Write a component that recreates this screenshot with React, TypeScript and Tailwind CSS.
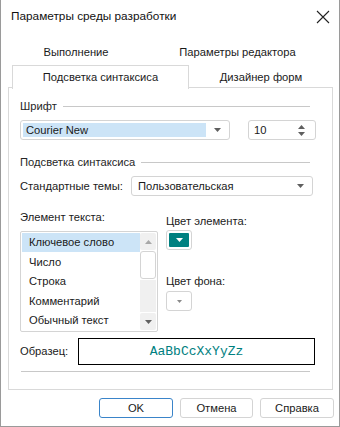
import React from "react";

const font = { fontFamily: '"Liberation Sans", Arial, sans-serif' };

function Arrow({ color = "#5f5f5f" }: { color?: string }) {
  return (
    <svg width="7" height="4" viewBox="0 0 7 4">
      <path d="M0 0 H7 L3.5 4 Z" fill={color} />
    </svg>
  );
}

function GroupHeader({ title }: { title: string }) {
  return (
    <div className="flex items-center h-[16px] pr-[22px]">
      <span className="text-[#262626]">{title}</span>
      <div className="flex-1 h-px bg-[#c8c8c8] ml-[6px]" />
    </div>
  );
}

const items = ["Ключевое слово", "Число", "Строка", "Комментарий", "Обычный текст"];

export default function App() {
  return (
    <div
      className="w-[340px] h-[427px] bg-white border-x border-b border-[#9a9a9a] flex flex-col text-[11.2px] text-[#1a1a1a] whitespace-nowrap"
      style={font}
    >
      {/* Title bar */}
      <div className="h-[33px] flex items-center justify-between pl-[10px] pr-[8px]">
        <span className="text-[11.8px] text-[#111]">Параметры среды разработки</span>
        <svg width="14" height="14" viewBox="0 0 14 14" className="mr-[1px]">
          <path d="M1 1 L13 13 M13 1 L1 13" stroke="#222" strokeWidth="1.1" />
        </svg>
      </div>

      {/* Tabs */}
      <div className="flex h-[22px] mt-[8px] pl-[11px]">
        <div className="w-[128px] flex items-center justify-center">Выполнение</div>
        <div className="w-[195px] flex items-center justify-center">Параметры редактора</div>
      </div>
      <div className="flex h-[25px] pl-[7px] pr-[6px] items-end">
        <div className="w-[4px] h-px bg-[#d9d9d9]" />
        <div className="w-[177px] h-[24px] border-x border-t border-[#d9d9d9] flex items-center justify-center -mb-px bg-white relative">
          Подсветка синтаксиса
        </div>
        <div className="flex-1 h-[21px] flex items-center justify-center border-b border-[#d9d9d9]">
          Дизайнер форм
        </div>
      </div>

      {/* Panel */}
      <div className="mx-[7px] mr-[6px] h-[302px] border-x border-b border-[#d9d9d9] flex flex-col pl-[11px] pt-[10px]">
        <GroupHeader title="Шрифт" />
        <div className="flex mt-[6px] h-[20px]">
          <div className="w-[210px] h-[20px] border border-[#d4d4d4] rounded-[3px] flex items-center pl-[2px] pr-[8px]">
            <div className="flex-1 h-[14px] bg-[#cce4f7] flex items-center pl-[3px]">Courier New</div>
            <div className="ml-[8px]">
              <Arrow />
            </div>
          </div>
          <div className="w-[68px] h-[20px] ml-[18px] border border-[#d4d4d4] rounded-[3px] flex items-center pl-[5px] pr-[10px] justify-between">
            <span>10</span>
            <div className="flex flex-col gap-[3px]">
              <svg width="7" height="4" viewBox="0 0 7 4">
                <path d="M0 4 H7 L3.5 0 Z" fill="#5f5f5f" />
              </svg>
              <Arrow />
            </div>
          </div>
        </div>

        <div className="mt-[14px]">
          <GroupHeader title="Подсветка синтаксиса" />
        </div>
        <div className="flex items-center mt-[6px] h-[20px]">
          <span className="w-[111px]">Стандартные темы:</span>
          <div className="w-[182px] h-[20px] border border-[#d4d4d4] rounded-[3px] flex items-center justify-between pl-[6px] pr-[8px]">
            <span>Пользовательская</span>
            <Arrow />
          </div>
        </div>

        <div className="flex mt-[13px]">
          <div className="w-[138px] flex flex-col">
            <div className="h-[16px] flex items-center">Элемент текста:</div>
            <div className="mt-[6px] h-[101px] border border-[#d4d4d4] rounded-[2px] flex p-px">
              <div className="flex-1 flex flex-col">
                {items.map((t, i) => (
                  <div
                    key={t}
                    className={`h-[20px] flex items-center pl-[7px] ${i === 0 ? "bg-[#cce4f7]" : ""}`}
                  >
                    {t}
                  </div>
                ))}
              </div>
              <div className="w-[16px] flex flex-col items-center gap-px">
                <div className="w-[16px] h-[17px] rounded-[2px] bg-[#f0f0f0] flex items-center justify-center">
                  <svg width="7" height="4" viewBox="0 0 7 4">
                    <path d="M0 4 H7 L3.5 0 Z" fill="#a8a8a8" />
                  </svg>
                </div>
                <div className="w-[16px] h-[28px] border border-[#d4d4d4] rounded-[3px] bg-white" />
                <div className="flex-1 w-[16px] bg-[#f0f0f0]" />
                <div className="w-[16px] h-[17px] rounded-[2px] bg-[#f0f0f0] flex items-center justify-center">
                  <Arrow color="#606060" />
                </div>
              </div>
            </div>
          </div>
          <div className="ml-[8px] flex flex-col">
            <div className="h-[16px] flex items-center mt-[4px]">Цвет элемента:</div>
            <div className="mt-[1px] w-[26px] h-[20px] border border-[#d4d4d4] rounded-[3px] p-[2px]">
              <div className="w-full h-full bg-[#008080] rounded-[1px] flex items-center justify-center">
                <Arrow color="#ffffff" />
              </div>
            </div>
            <div className="h-[16px] flex items-center mt-[23px]">Цвет фона:</div>
            <div className="mt-[2px] w-[26px] h-[20px] border border-[#d4d4d4] rounded-[3px] flex items-center justify-center">
              <svg width="5" height="3" viewBox="0 0 5 3">
                <path d="M0 0 H5 L2.5 3 Z" fill="#8a8a8a" />
              </svg>
            </div>
          </div>
        </div>

        <div className="flex items-center mt-[6px] h-[27px]">
          <span className="w-[58px]">Образец:</span>
          <div
            className="w-[237px] h-[27px] border border-black flex items-center justify-center text-[13px] text-[#008080]"
            style={{ fontFamily: '"Liberation Mono", "Courier New", monospace' }}
          >
            AaBbCcXxYyZz
          </div>
        </div>
        <div className="mt-[6px] h-px bg-[#c8c8c8] ml-[1px] mr-[22px]" />
      </div>

      {/* Buttons */}
      <div className="flex justify-end gap-[7px] pr-[5px] mt-[8px]">
        <div className="w-[74px] h-[20px] border border-[#3a84c9] rounded-[3px] flex items-center justify-center">
          OK
        </div>
        <div className="w-[73px] h-[20px] border border-[#d4d4d4] rounded-[3px] flex items-center justify-center">
          Отмена
        </div>
        <div className="w-[74px] h-[20px] border border-[#d4d4d4] rounded-[3px] flex items-center justify-center">
          Справка
        </div>
      </div>
    </div>
  );
}
